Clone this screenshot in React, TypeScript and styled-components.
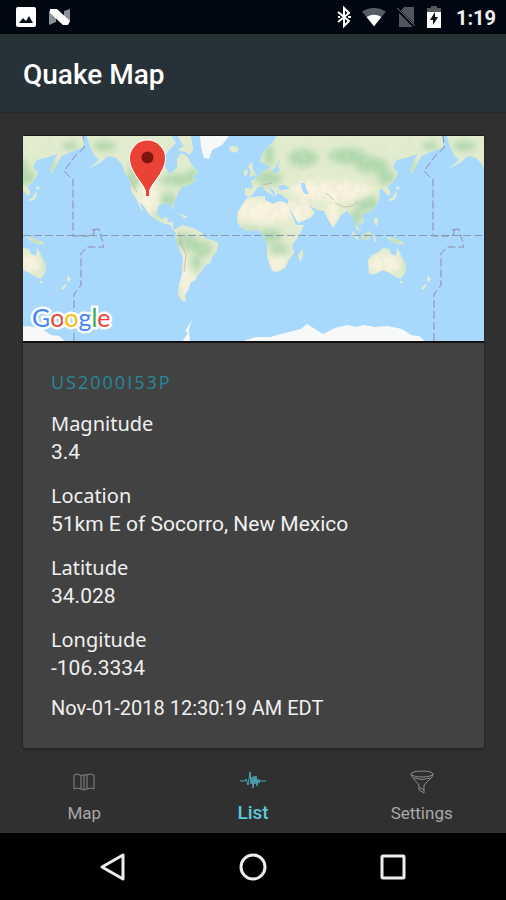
import React from "react";
import styled, { createGlobalStyle } from "styled-components";

const GlobalStyle = createGlobalStyle`
  *, *::before, *::after { box-sizing: border-box; }
  body { margin: 0; background: #303030; font-family: Roboto, sans-serif; }
  button { border: 0; padding: 0; background: none; font: inherit; color: inherit; cursor: pointer; }
  svg { display: block; }
`;

const Screen = styled.div`
  min-height: 100vh;
  display: flex;
  flex-direction: column;
  background: #303030;
  color: #f0f0f0;
`;

const StatusBar = styled.div`
  height: 34px;
  padding: 0 10px 0 16px;
  display: flex;
  align-items: center;
  justify-content: space-between;
  background: #000710;
`;

const StatusGroup = styled.div<{ $gap: number }>`
  display: flex;
  align-items: center;
  gap: ${(p) => p.$gap}px;
`;

const Clock = styled.time`
  margin-left: 4px;
  padding-top: 2px;
  font-size: 20px;
  line-height: 24px;
  font-weight: 700;
  color: #f0f0f0;
`;

const Header = styled.header`
  height: 79px;
  padding: 4px 23px 0;
  display: flex;
  align-items: center;
  background: #263238;
  border-bottom: 1px solid #222a2e;
`;

const Title = styled.h1`
  margin: 0;
  font-size: 28px;
  line-height: 32px;
  font-weight: 500;
  color: #fff;
`;

const Main = styled.main`
  flex: 1;
  padding: 22px 22px 0 23px;
`;

const Card = styled.article`
  border-radius: 3px;
  overflow: hidden;
  background: #424242;
  box-shadow: 0 1px 3px rgba(0, 0, 0, 0.4);
`;

const MapFrame = styled.div`
  position: relative;
  border-top: 1px solid #161a1c;
  border-bottom: 2px solid #111;
`;

const GoogleMark = styled.div`
  position: absolute;
  left: 9px;
  bottom: 6px;
  font-family: Lato, sans-serif;
  font-size: 25px;
  line-height: 36px;
  -webkit-text-stroke: 5px #fff;
  paint-order: stroke fill;
`;

const Letter = styled.span<{ $color: string }>`
  color: ${(p) => p.$color};
  paint-order: stroke fill;
`;

const Details = styled.div`
  padding: 28px 28px 26px;
`;

const QuakeId = styled.h2`
  margin: 0 0 16px;
  font-family: "Open Sans", sans-serif;
  font-size: 18px;
  line-height: 23px;
  font-weight: 400;
  letter-spacing: 2px;
  color: #26899a;
`;

const Facts = styled.dl`
  margin: 0 0 12px;
  display: flex;
  flex-direction: column;
  gap: 16px;
`;

const Label = styled.dt`
  font-family: "Noto Sans", sans-serif;
  font-size: 20px;
  line-height: 28px;
`;

const Value = styled.dd`
  margin: 0;
  font-size: 21px;
  line-height: 28px;
`;

const Stamp = styled.time`
  display: block;
  font-size: 20px;
  line-height: 28px;
`;

const Tabs = styled.nav`
  height: 85px;
  display: grid;
  grid-template-columns: repeat(3, 1fr);
`;

const Tab = styled.button<{ $active?: boolean }>`
  display: flex;
  flex-direction: column;
  align-items: center;
  justify-content: flex-end;
  gap: 7px;
  padding-bottom: 8px;
  font-size: ${(p) => (p.$active ? 19 : 17)}px;
  line-height: 24px;
  font-weight: ${(p) => (p.$active ? 500 : 400)};
  color: ${(p) => (p.$active ? "#5ec8de" : "#a8a8a8")};
`;

const TabIcon = styled.span`
  height: 24px;
  display: grid;
  place-items: center;
`;

const SystemNav = styled.nav`
  height: 67px;
  padding: 0 43px;
  display: grid;
  grid-template-columns: repeat(3, 1fr);
  background: #000;
`;

const SystemButton = styled.button`
  display: grid;
  place-items: center;
`;

const outlines = [
  "M87 136L90 147L94 155L99 160L88 169L101 162L108 156L116 158L122 164L125 173L130 181L131 191L137 200L140 208L143 211L139 202L143 205L149 214L155 219L163 223L170 225L174 231L178 234L177 229L173 229L173 222L168 222L167 217L161 219L157 214L158 206L164 203L171 204L174 211L174 203L178 193L182 187L191 184L197 179L192 177L198 172L192 165L187 156L181 153L177 159L177 168L170 174L165 167L163 159L169 150L176 143L172 136Z",
  "M178 136H191L193 149L190 155L185 152L178 150L184 146L181 142Z",
  "M229 147l4-1 5 1 1 3-4 3-5-2Z",
  "M177 228L183 225L193 228L202 233L205 238L212 240L218 243L217 250L213 256L210 263L205 265L202 271L197 276L196 280L191 282L188 290L185 295L186 302L181 300L178 294L179 285L182 275L183 258L178 246L175 240Z",
  "M250 197L265 196L265 200L273 204L280 201L287 203L291 213L296 225L304 225L299 236L292 245L294 253L288 261L285 268L277 272L272 271L267 256L267 245L263 235L258 230L248 231L240 227L237 220L238 212L241 207L246 199Z",
  "M298 255L303 249L303 256L300 262Z",
  "M245 195L245 188L253 188L251 181L259 176L263 171L270 168L266 164L260 162L262 154L270 145L277 136H442L444 142L443 147L436 150L428 153L422 156L418 162L412 174L410 169L414 160L418 154L405 158L397 160L393 166L398 174L392 183L387 186L391 193L388 196L382 189L379 190L380 197L377 204L371 211L365 213L362 216L364 221L360 226L356 220L356 224L361 231L356 229L353 217L347 211L341 215L333 228L328 219L324 211L317 210L309 205L315 213L310 218L298 223L288 205L288 200L282 195L277 193L277 197L273 190L268 187L275 197L266 191L262 186L257 188L253 194L249 197Z",
  "M248 166l4-4 1 8 4 5-8 2 2-5ZM244 170l4 0-1 5-3 1Z",
  "M388 200l5-3 3-6 1 4-3 5-5 1ZM395 188l5-2-2 4ZM351 230l7 6 1 5-5-4ZM361 236l8-5 3 3-4 6-6-1ZM374 235l3 0-2 3 2 4-3-1ZM375 217l3 2-1 7-3-4ZM386 237l7 1 8 3 4 4-7-1-6-2Z",
  "M368 260L372 255L379 252L383 248L389 249L391 254L396 256L397 247L400 253L402 258L406 264L406 271L401 279L394 276L390 273L383 270L375 274L369 274ZM399 281h4l-2 3Z",
  "M427 275l4 4-3 4-1-4ZM425 284l2 1-4 5-2-1Z",
  "M176 213l8 2 2 2-4-1ZM183 216l4 0 0 2-4 0Z",
];

const ice = [
  "M200 136H229L222 145L212 150L209 159L204 158L201 147Z",
  "M243 341L256 337L270 337L281 334L293 331L301 329L307 324L315 329L323 334L335 328L347 325L357 327L364 325L375 327L388 326L402 329L411 335L419 336L426 342H243Z",
  "M182 342L188 333L185 331L192 320L189 329L190 342Z",
];

const woods = [
  [178, 180, 18, 6], [134, 176, 6, 12], [104, 146, 12, 5], [193, 174, 6, 5], [168, 200, 9, 7],
  [186, 243, 13, 9], [203, 249, 9, 8], [196, 263, 5, 8], [270, 236, 12, 7], [279, 250, 9, 6],
  [248, 229, 12, 2], [268, 178, 14, 7], [303, 158, 15, 9], [348, 156, 20, 8], [371, 165, 17, 8],
  [386, 177, 9, 8], [367, 204, 12, 9], [356, 218, 7, 8], [269, 155, 5, 12], [365, 236, 5, 4],
  [396, 241, 7, 3], [411, 166, 4, 7], [404, 265, 2, 9], [430, 146, 8, 4], [158, 214, 3, 5],
];

const deserts = [
  [265, 211, 31, 12], [301, 212, 12, 11], [318, 190, 28, 10], [346, 191, 25, 10], [149, 198, 11, 14],
  [386, 264, 17, 9], [277, 263, 10, 8], [181, 267, 3, 22], [333, 213, 6, 14], [188, 282, 5, 15],
];

const dateLine =
  "M83 135L84 148L76 155L64 171L73 180V236H88L94 234V230H91L99 229L104 247H88L81 253V285L74 294V342";

function WorldCopy() {
  return (
    <g id="world">
      {outlines.map((d) => (
        <path key={d} d={d} fill="#e3ecce" />
      ))}
      <g clipPath="url(#land)">
        <g filter="url(#soft)">
          {woods.map(([x, y, rx, ry]) => (
            <ellipse key={`${x}-${y}`} cx={x} cy={y} rx={rx} ry={ry} fill="#b1d8ae" />
          ))}
          {deserts.map(([x, y, rx, ry]) => (
            <ellipse key={`${x}-${y}`} cx={x} cy={y} rx={rx} ry={ry} fill="#f9f3df" />
          ))}
        </g>
        <rect x="60" y="136" width="390" height="206" filter="url(#terrain)" opacity="0.4" />
        <path
          d="M335 203l9 4 8-1 5-4M179 232l2 12 5 10-2 18M262 185l10-2M326 193l8 7M128 175l9 17"
          stroke="#b9a99c"
          strokeWidth="1"
          fill="none"
          opacity="0.6"
        />
      </g>
      <path
        d="M301 183l4 0 1 5 3 6-4 0-3-5ZM278 186l7-1 5 4-10 1ZM281 157l-3 9 2 4-5 3-3-2 4-4ZM282 171l-8 2"
        fill="#a8d9fd"
      />
      {ice.map((d) => (
        <path key={d} d={d} fill="#f7f8f8" />
      ))}
      <path d={dateLine} fill="none" stroke="#8f8bac" strokeWidth="1" strokeDasharray="8 3" />
    </g>
  );
}

function WorldMap() {
  return (
    <svg viewBox="23 136 461 205" width="100%" role="img" aria-label="Map of the earthquake location">
      <defs>
        <clipPath id="land">
          {outlines.map((d) => (
            <path key={d} d={d} />
          ))}
        </clipPath>
        <filter id="soft">
          <feGaussianBlur stdDeviation="3" />
        </filter>
        <filter id="terrain" x="0" y="0" width="100%" height="100%">
          <feTurbulence type="fractalNoise" baseFrequency="0.16" numOctaves="3" seed="4" />
          <feColorMatrix values="0 0 0 0 0.66  0 0 0 0 0.80  0 0 0 0 0.62  3 0 0 0 -1.4" />
        </filter>
      </defs>
      <rect x="23" y="136" width="461" height="206" fill="#a8d9fd" />
      <WorldCopy />
      <use href="#world" x="-360" />
      <use href="#world" x="360" />
      <path d="M23 235.500H484" stroke="#8b98ae" strokeWidth="1" strokeDasharray="8 3" />
      <path
        d="M147.500 196.500C146 183 130 174 130 158A17.500 17.500 0 0 1 165 158C165 174 149 183 147.500 196.500Z"
        fill="#ea4335"
        stroke="#fff"
        strokeWidth="2"
        paintOrder="stroke"
      />
      <path d="M147.500 180V196" stroke="#ea4335" strokeWidth="3" />
      <circle cx="147.500" cy="157.500" r="6" fill="#811411" />
    </svg>
  );
}

function PictureIcon() {
  return (
    <svg width="20" height="20" viewBox="0 0 20 20" aria-hidden="true">
      <rect x="0" y="0" width="20" height="20" rx="2" fill="#fff" />
      <path d="M3 16L7 11L10 14L13 9L17 16Z" fill="#071019" />
    </svg>
  );
}

function NougatIcon() {
  return (
    <svg width="22" height="18" viewBox="0 0 22 18" aria-hidden="true">
      <path d="M0 3L7 6V14L0 17ZM15 3L21 1V14L15 12Z" fill="#8b9196" />
      <path d="M1 1H8L21 13L19 17H14L1 5Z" fill="#fff" />
    </svg>
  );
}

function BluetoothIcon() {
  return (
    <svg width="16" height="22" viewBox="0 0 16 22" fill="none" stroke="#fff" strokeWidth="2" aria-hidden="true">
      <path d="M2 6L13 15L8 20V2L13 7L2 16" />
      <path d="M2 11h2M12 11h3" />
    </svg>
  );
}

function WifiIcon() {
  return (
    <svg width="24" height="20" viewBox="0 0 26 20" aria-hidden="true">
      <path d="M0 4Q13-4 26 4L13 20Z" fill="#555d63" />
      <path d="M5 10Q13 5 21 10L13 20Z" fill="#fff" />
    </svg>
  );
}

function NoSimIcon() {
  return (
    <svg width="20" height="20" viewBox="0 0 20 20" aria-hidden="true">
      <path d="M8 0H18V20H3V6Z" fill="#50565c" />
      <path d="M0 1L19 20" stroke="#000710" strokeWidth="3" />
      <path d="M1 1L19 19" stroke="#656b70" strokeWidth="1" />
    </svg>
  );
}

function BatteryIcon() {
  return (
    <svg width="16" height="22" viewBox="0 0 16 22" aria-hidden="true">
      <path d="M5 0H11V2H15V7H1V2H5Z" fill="#555a5e" />
      <path d="M1 6H15V22H1Z" fill="#fff" />
      <path d="M9 6L4 14H7V19L12 11H9Z" fill="#071019" />
    </svg>
  );
}

function MapIcon() {
  return (
    <svg width="22" height="18" viewBox="0 0 22 18" fill="none" stroke="#858585" strokeWidth="1" aria-hidden="true">
      <path d="M1 2Q4 0 7 2Q9 3 9 3Q9 1 14 2L14 2Q18 0 21 2V16Q18 14 14 16Q11 18 8 16Q4 14 1 16ZM8 3V16M11 2V16M14 2V16" />
    </svg>
  );
}

function QuakeIcon() {
  return (
    <svg
      width="26"
      height="22"
      viewBox="0 0 26 22"
      fill="none"
      stroke="#4aa8bb"
      strokeWidth="1"
      strokeLinejoin="round"
      aria-hidden="true"
    >
      <path d="M0 10H5L6 8L8 14L10 1L11 13L12 6L13 17L14 5L15 13L16 5L17 15L18 8L19 12L20 9L21 10H26" />
    </svg>
  );
}

function FunnelIcon() {
  return (
    <svg width="26" height="24" viewBox="0 0 26 24" fill="none" stroke="#8a8a8a" strokeWidth="1" aria-hidden="true">
      <ellipse cx="13" cy="4" rx="11" ry="3" />
      <path d="M2 4Q2 6 4 8L10 15V20L15 23V15L22 8Q24 6 24 4M5 8Q13 11 21 8M10 17L15 20" />
    </svg>
  );
}

const markLetters = [
  ["G", "#4285f4"],
  ["o", "#ea4335"],
  ["o", "#fbbc05"],
  ["g", "#4285f4"],
  ["l", "#34a853"],
  ["e", "#ea4335"],
];

const facts = [
  ["Magnitude", "3.4"],
  ["Location", "51km E of Socorro, New Mexico"],
  ["Latitude", "34.028"],
  ["Longitude", "-106.3334"],
];

export default function App() {
  return (
    <Screen>
      <GlobalStyle />
      <StatusBar>
        <StatusGroup $gap={13}>
          <PictureIcon />
          <NougatIcon />
        </StatusGroup>
        <StatusGroup $gap={10}>
          <BluetoothIcon />
          <WifiIcon />
          <NoSimIcon />
          <BatteryIcon />
          <Clock>1:19</Clock>
        </StatusGroup>
      </StatusBar>
      <Header>
        <Title>Quake Map</Title>
      </Header>
      <Main>
        <Card>
          <MapFrame>
            <WorldMap />
            <GoogleMark>
              {markLetters.map(([char, color], i) => (
                <Letter key={i} $color={color}>
                  {char}
                </Letter>
              ))}
            </GoogleMark>
          </MapFrame>
          <Details>
            <QuakeId>US2000I53P</QuakeId>
            <Facts>
              {facts.map(([label, value]) => (
                <div key={label}>
                  <Label>{label}</Label>
                  <Value>{value}</Value>
                </div>
              ))}
            </Facts>
            <Stamp>Nov-01-2018 12:30:19 AM EDT</Stamp>
          </Details>
        </Card>
      </Main>
      <Tabs aria-label="Sections">
        <Tab type="button">
          <TabIcon>
            <MapIcon />
          </TabIcon>
          Map
        </Tab>
        <Tab type="button" $active aria-current="page">
          <TabIcon>
            <QuakeIcon />
          </TabIcon>
          List
        </Tab>
        <Tab type="button">
          <TabIcon>
            <FunnelIcon />
          </TabIcon>
          Settings
        </Tab>
      </Tabs>
      <SystemNav aria-label="System">
        <SystemButton type="button" aria-label="Back">
          <svg width="26" height="28" viewBox="0 0 26 28" fill="none" stroke="#eee" strokeWidth="3" strokeLinejoin="round">
            <path d="M2 14L23 2V26Z" />
          </svg>
        </SystemButton>
        <SystemButton type="button" aria-label="Home">
          <svg width="28" height="28" viewBox="0 0 28 28" fill="none" stroke="#eee" strokeWidth="3">
            <circle cx="14" cy="14" r="12" />
          </svg>
        </SystemButton>
        <SystemButton type="button" aria-label="Recent apps">
          <svg width="26" height="26" viewBox="0 0 26 26" fill="none" stroke="#eee" strokeWidth="3">
            <rect x="2" y="2" width="22" height="22" rx="1" />
          </svg>
        </SystemButton>
      </SystemNav>
    </Screen>
  );
}
